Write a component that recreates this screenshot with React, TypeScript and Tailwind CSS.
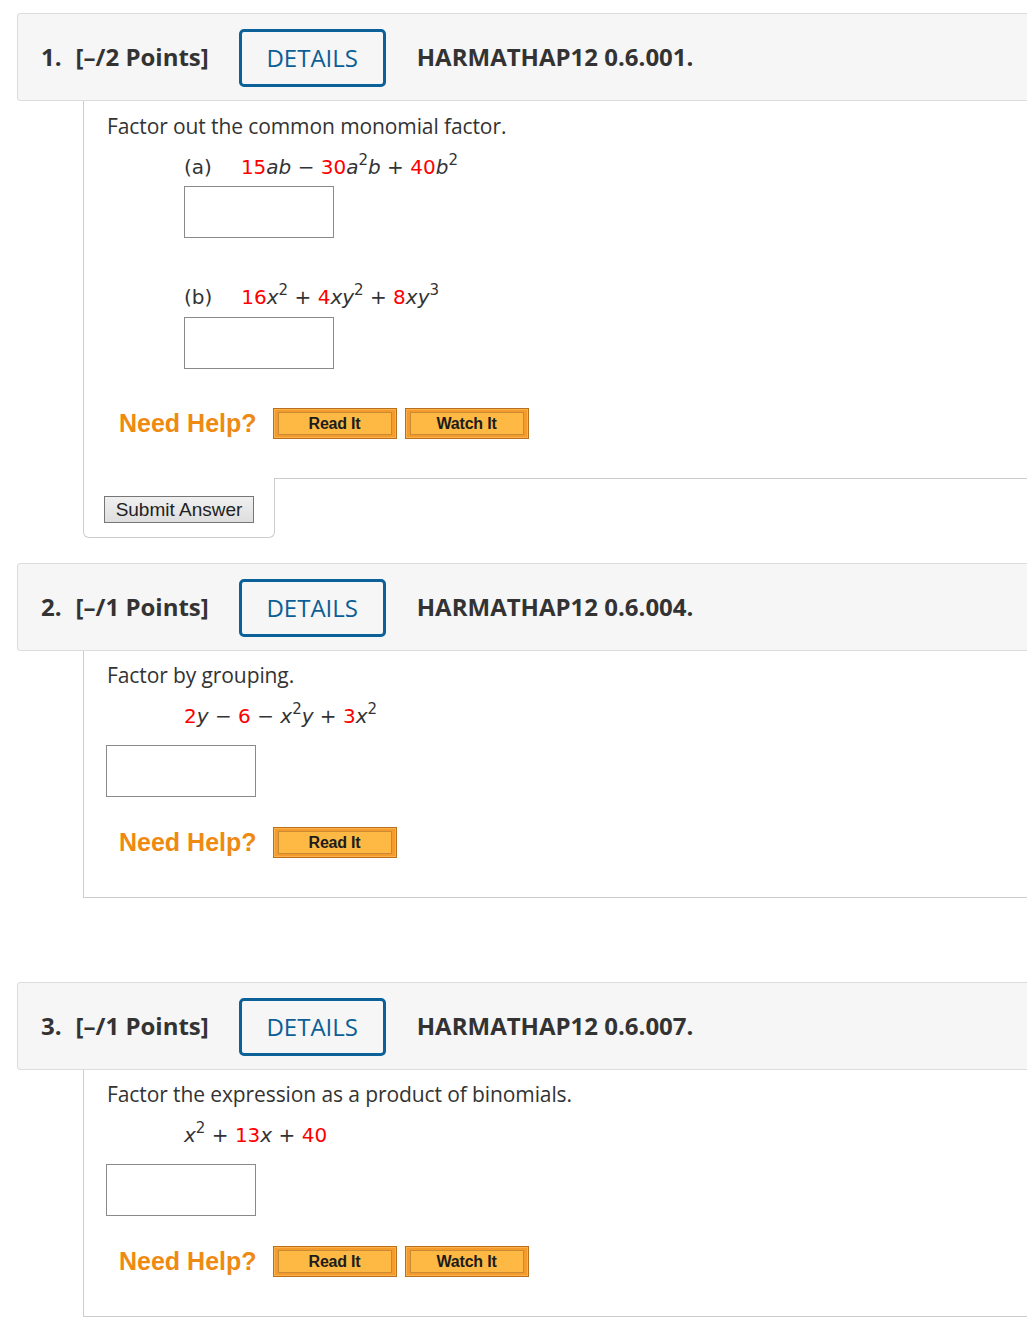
import React from "react";

const R = ({ children }: { children: React.ReactNode }) => (
  <span className="text-[#ff0000]">{children}</span>
);
const I = ({ children }: { children: React.ReactNode }) => (
  <span className="italic">{children}</span>
);
const Sup = ({ children }: { children: React.ReactNode }) => (
  <span className="relative -top-[9px] align-baseline text-[15px] leading-none">{children}</span>
);

function HelpButton({ label }: { label: string }) {
  return (
    <span className="inline-flex h-[31px] w-[124px] border border-[#b8701f] bg-[#f59b2b] px-[4px] py-[3px] shadow-[inset_0_0_0_1px_#fbb24a]">
      <span className="flex flex-1 items-center justify-center border border-[#c98a35] bg-[#fdb944] font-['Liberation_Sans',Arial,sans-serif] text-[16px] font-bold leading-none tracking-[-0.2px] text-[#1c1c1c]">
        {label}
      </span>
    </span>
  );
}

function NeedHelp({ watch, mt }: { watch: boolean; mt: string }) {
  return (
    <div className={`flex h-[31px] items-center ${mt}`}>
      <span className="ml-[12px] mr-[16px] font-['Liberation_Sans',Arial,sans-serif] text-[25px] font-bold leading-none text-[#ee8a12]">
        Need Help?
      </span>
      <HelpButton label="Read It" />
      {watch && (
        <span className="ml-[8px] flex">
          <HelpButton label="Watch It" />
        </span>
      )}
    </div>
  );
}

function Header({ n, pts, code, mt }: { n: number; pts: number; code: string; mt: string }) {
  return (
    <div
      className={`${mt} flex h-[88px] items-center rounded-[3px] border border-[#dcdcdc] bg-[#f6f6f6] pl-[23px] font-['Open_Sans',sans-serif] text-[24px] text-[#333333]`}
    >
      <span className="font-bold">{n}.</span>
      <span className="ml-[14px] font-bold">[–/{pts} Points]</span>
      <span className="ml-[30px] mt-[2px] flex h-[58px] w-[147px] items-center justify-center rounded-[5px] border-[3px] border-[#0b6198] text-[#0b5f96]">
        DETAILS
      </span>
      <span className="ml-[31px] font-bold">{code}</span>
    </div>
  );
}

function Input({ ml, mt }: { ml: string; mt: string }) {
  return <div className={`${ml} ${mt} h-[52px] w-[150px] border border-[#8a8a8a] bg-white`} />;
}

const bodyText = "font-['Open_Sans',sans-serif] text-[21px] leading-[26px] text-[#333333] tracking-[-0.1px]";
const mathText = "font-['DejaVu_Sans',Verdana,sans-serif] text-[20px] leading-[26px] h-[26px] text-[#333333]";

export default function App() {
  return (
    <div className="w-[1027px] overflow-hidden bg-white">
      <div className="ml-[17px] w-[1040px] pt-[13px] pb-[20px]">
        {/* Question 1 */}
        <Header n={1} pts={2} code="HARMATHAP12 0.6.001." mt="" />
        <div className="ml-[66px] border-l border-[#cccccc] pl-[23px] pb-[39px]">
          <div className={`${bodyText} pt-[12px]`}>Factor out the common monomial factor.</div>
          <div className={`${mathText} mt-[15px] ml-[77px] whitespace-pre`}>
            (a)<span className="ml-[29px]"></span>
            <R>15</R>
            <I>ab</I> − <R>30</R>
            <I>a</I>
            <Sup>2</Sup>
            <I>b</I> + <R>40</R>
            <I>b</I>
            <Sup>2</Sup>
          </div>
          <Input ml="ml-[77px]" mt="mt-[6px]" />
          <div className={`${mathText} mt-[46px] ml-[77px] whitespace-pre`}>
            (b)<span className="ml-[29px]"></span>
            <R>16</R>
            <I>x</I>
            <Sup>2</Sup> + <R>4</R>
            <I>xy</I>
            <Sup>2</Sup> + <R>8</R>
            <I>xy</I>
            <Sup>3</Sup>
          </div>
          <Input ml="ml-[77px]" mt="mt-[7px]" />
          <NeedHelp watch={true} mt="mt-[39px]" />
        </div>
        <div className="ml-[66px] flex">
          <div className="w-[192px] rounded-b-[6px] border border-t-0 border-[#cccccc] pl-[20px] pt-[18px] pb-[14px]">
            <button className="block h-[27px] w-[150px] border border-[#767676] bg-gradient-to-b from-[#f0f0f0] to-[#dedede] font-['Liberation_Sans',Arial,sans-serif] text-[19px] leading-none text-[#222222]">
              Submit Answer
            </button>
          </div>
          <div className="flex-1 border-t border-[#cccccc]" />
        </div>

        {/* Question 2 */}
        <Header n={2} pts={1} code="HARMATHAP12 0.6.004." mt="mt-[25px]" />
        <div className="ml-[66px] border-b border-l border-[#cccccc] pl-[23px] pb-[39px]">
          <div className={`${bodyText} pt-[11px]`}>Factor by grouping.</div>
          <div className={`${mathText} mt-[15px] ml-[77px] whitespace-pre`}>
            <R>2</R>
            <I>y</I> − <R>6</R> − <I>x</I>
            <Sup>2</Sup>
            <I>y</I> + <R>3</R>
            <I>x</I>
            <Sup>2</Sup>
          </div>
          <Input ml="-ml-[1px]" mt="mt-[16px]" />
          <NeedHelp watch={false} mt="mt-[30px]" />
        </div>

        {/* Question 3 */}
        <Header n={3} pts={1} code="HARMATHAP12 0.6.007." mt="mt-[84px]" />
        <div className="ml-[66px] border-b border-l border-[#cccccc] pl-[23px] pb-[39px]">
          <div className={`${bodyText} pt-[11px]`}>Factor the expression as a product of binomials.</div>
          <div className={`${mathText} mt-[15px] ml-[77px] whitespace-pre`}>
            <I>x</I>
            <Sup>2</Sup> + <R>13</R>
            <I>x</I> + <R>40</R>
          </div>
          <Input ml="-ml-[1px]" mt="mt-[16px]" />
          <NeedHelp watch={true} mt="mt-[30px]" />
        </div>
      </div>
    </div>
  );
}
